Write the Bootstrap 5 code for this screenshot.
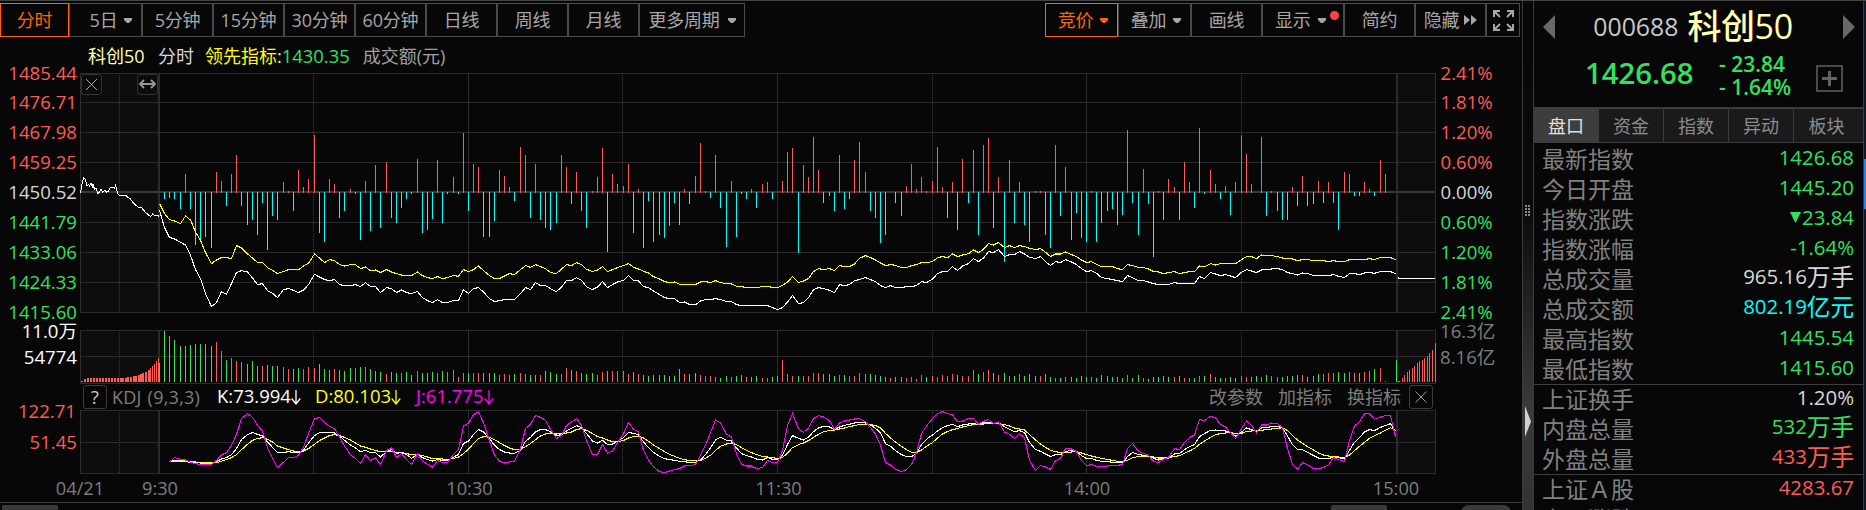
<!DOCTYPE html>
<html lang="zh-CN">
<head>
<meta charset="utf-8">
<title>科创50 分时</title>
<link href="https://cdn.jsdelivr.net/npm/bootstrap@5.3.0/dist/css/bootstrap.min.css" rel="stylesheet">
<style>
  :root { --up:#ff5a55; --down:#33e160; --frame:#4a4a4a; --grid:#2b2b2b; }
  body { background:#070707; color:#a0a0a0; font-family:"Open Sans","Noto Sans CJK SC",sans-serif; font-size:18px; line-height:1; height:510px; overflow:hidden; }
  svg { display:block; overflow:visible; }
  .app-frame { height:510px; border-top:1px solid #444; }
  .chart-pane { width:1522px; height:509px; }
  .tools { height:34px; margin-top:2px; }
  .tools-right { margin-right:2px; }
  .tool { height:34px; background:transparent; border:1px solid var(--frame); border-radius:0; color:#a6a6a6; padding:0; font-size:18px; line-height:1; white-space:nowrap; letter-spacing:-.2px; gap:7px; }
  .tool.active-tool { border-color:#f60; color:#f60; }
  .tool .cr { width:8px; height:5px; flex:none; }
  .w69{width:69px}.w71{width:71px}.w73{width:73px}.w82{width:82px}.w106{width:106px}.w34{width:34px}
  .dot { position:absolute; right:4px; top:7px; width:9px; height:9px; border-radius:50%; background:#ff4343; }
  .legend-row { height:34px; padding:4px 0 0 88px; }
  .legend-row span { white-space:nowrap; }
  .kdj-row { height:26px; padding:0 89px 1px 83px; }
  .kbox { width:24px; height:24px; border:1px solid #3c3c3c; border-radius:3px; color:#ccc; }
  .up{color:var(--up)}.dn{color:var(--down)}.ye{color:#ff0}.mg{color:#f0f}.cy{color:#0ff}.pale{color:#ffffae}.lt{color:#d8d8d8}.dim{color:#7d7d7d}
  .chart text { font-size:18.6px; }
  .chart .time { font-size:18.2px; fill:#7d7d7d; }
  .scroll-strip { height:8px; border-top:1px solid #3c3c3c; overflow:hidden; }
  .thumb { height:8px; margin-top:2px; background:#3a3a3a; border-radius:2px 2px 0 0; }
  .splitter { width:12px; border-left:1px solid #3c3c3c; border-right:1px solid #3c3c3c; background:linear-gradient(#070707 0,#0a0a0a 40%,#3a3a3a 80%,#333); }
  .quote { width:330px; height:509px; overflow:hidden; border-right:1px solid #3c3c3c; }
  .edge { width:2px; background:#0a1730; }
  .edge div { margin-top:158px; height:50px; background:#1e86ff; }
  .q-title { height:44px; padding:0 8px 0 9px; }
  .q-ident { gap:9px; padding:6px 12px 0 0; }
  .q-price { height:62px; padding-left:51px; }
  .q-code { font-size:24.8px; color:#c8c8c8; }
  .q-name { font-size:34px; font-weight:500; color:#ffffae; letter-spacing:-.4px; line-height:44px; white-space:nowrap;}
  .q-last { font-size:29.3px; font-weight:600; width:118px; }
  .q-diff { font-size:21px; font-weight:600; line-height:23px; width:80px; white-space:pre; }
  .q-tabs { height:36px; border-top:2px solid #3c3c3c; border-bottom:1px solid #3c3c3c; }
  .q-tabs .nav-link { height:33px; padding:0; width:65px; border-radius:0; border-right:1px solid #3c3c3c; background:#1a1a1a; color:#8c8c8c; font-size:18px; line-height:34px; text-align:center; }
  .q-tabs .nav-link.active { background:#3d3d3d; color:#e0e0e0; }
  .q-tabs .nav-link:last-child { width:auto; flex:1; border:0; padding-right:4px; }
  .q-row { height:30px; padding:0 9px 0 8px; font-size:23px; color:#808080; background:transparent; white-space:nowrap; }
  .q-row .val { font-size:20.4px; padding-bottom:3px; }
  .q-row .val i { font-style:normal; font-size:23.6px; vertical-align:-2px; }
  .rule-top { box-shadow:inset 0 1px #3f3f3f; }
</style>
</head>
<body>
<div class="app-frame d-flex">
  <main class="chart-pane d-flex flex-column flex-shrink-0">
    <nav class="tools d-flex flex-shrink-0">
      <button class="tool active-tool w69">分时</button>
      <button class="tool w73 d-flex align-items-center justify-content-center" style="padding-left:11px">5日 <svg class="cr" viewBox="0 0 8 5"><path fill="currentColor" d="M0 0h8v2L5 5H3L0 2z"/></svg></button>
      <button class="tool w71">5分钟</button>
      <button class="tool w71">15分钟</button>
      <button class="tool w71">30分钟</button>
      <button class="tool w71">60分钟</button>
      <button class="tool w71">日线</button>
      <button class="tool w71">周线</button>
      <button class="tool w71">月线</button>
      <button class="tool w106 d-flex align-items-center justify-content-center" style="gap:8px">更多周期 <svg class="cr" viewBox="0 0 8 5"><path fill="currentColor" d="M0 0h8v2L5 5H3L0 2z"/></svg></button>
      <div class="tools-right d-flex ms-auto">
        <button class="tool active-tool w73 d-flex align-items-center justify-content-center" style="padding-left:3px">竞价 <svg class="cr" viewBox="0 0 8 5"><path fill="currentColor" d="M0 0h8v2L5 5H3L0 2z"/></svg></button>
        <button class="tool w73 d-flex align-items-center justify-content-center" style="padding-left:3px">叠加 <svg class="cr" viewBox="0 0 8 5"><path fill="currentColor" d="M0 0h8v2L5 5H3L0 2z"/></svg></button>
        <button class="tool w71">画线</button>
        <button class="tool w82 d-flex align-items-center position-relative ps-2"><span class="ps-1">显示</span> <svg class="cr" viewBox="0 0 8 5"><path fill="currentColor" d="M0 0h8v2L5 5H3L0 2z"/></svg><span class="dot"></span></button>
        <button class="tool w71">简约</button>
        <button class="tool w71 d-flex align-items-center justify-content-center" style="gap:5px">隐藏 <svg width="13" height="10" viewBox="0 0 13 10"><path fill="currentColor" d="M0 0 6 5 0 10zM7 0l6 5-6 5z"/></svg></button>
        <button class="tool w34 d-flex align-items-center justify-content-center"><svg width="21" height="21" viewBox="0 0 21 21" fill="none" stroke="currentColor" stroke-width="2"><path d="M1 7V1h6M1 1l6 6M14 1h6v6M20 1l-6 6M1 14v6h6M1 20l6-6M20 14v6h-6M20 20l-6-6"/></svg></button>
      </div>
    </nav>
    <div class="legend-row d-flex align-items-center flex-shrink-0">
      <span class="pale" style="width:70px">科创50</span><span class="lt" style="width:47px">分时</span>
      <span class="ye">领先指标:</span><span class="dn" style="width:81px;font-size:18.400px">1430.35</span><span>成交额(元)</span>
    </div>
    <svg class="chart flex-shrink-0" id="upper" width="1522" height="313" viewBox="0 71 1522 313"></svg>
    <div class="kdj-row d-flex align-items-center flex-shrink-0">
      <span class="kbox d-flex align-items-center justify-content-center">?</span>
      <span class="dim" style="width:110px;padding-left:5px;letter-spacing:.25px;word-spacing:1px;white-space:nowrap">KDJ&nbsp;(9,3,3)</span>
      <span class="d-flex align-items-center text-white" style="width:98px;font-size:18.500px">K:73.994<svg width="10" height="16" viewBox="0 0 10 16" fill="none" stroke="currentColor"><path d="M5 1v14M.7 9.5 5 15l4.300-5.500" stroke-width="1.300"/></svg></span>
      <span class="d-flex align-items-center ye" style="width:101px;font-size:18.500px">D:80.103<svg width="10" height="16" viewBox="0 0 10 16" fill="none" stroke="currentColor"><path d="M5 1v14M.7 9.5 5 15l4.300-5.500" stroke-width="1.300"/></svg></span>
      <span class="d-flex align-items-center mg" style="font-size:18.500px">J:61.775<svg width="10" height="16" viewBox="0 0 10 16" fill="none" stroke="currentColor"><path d="M5 1v14M.7 9.5 5 15l4.300-5.500" stroke-width="1.300"/></svg></span>
      <span class="d-flex ms-auto dim" style="gap:15px;margin-right:8px"><span>改参数</span><span>加指标</span><span>换指标</span></span>
      <span class="kbox d-flex align-items-center justify-content-center"><svg width="12" height="12" viewBox="0 0 12 12" stroke="#999"><path d="M.5.5l11 11M11.5.5l-11 11"/></svg></span>
    </div>
    <svg class="chart flex-shrink-0" id="lower" width="1522" height="92" viewBox="0 410 1522 92"></svg>
    <div class="scroll-strip d-flex flex-shrink-0">
      <div class="thumb" style="width:56px;margin-left:2px"></div>
      <div class="thumb" style="width:56px;margin-left:1273px"></div>
      <div class="thumb" style="width:50px;margin-left:74px;border-radius:9px 9px 0 0"></div>
    </div>
  </main>
  <div class="splitter flex-shrink-0">
    <svg width="10" height="509" viewBox="0 1 10 509" shape-rendering="crispEdges">
      <path stroke="#8a8a8a" stroke-dasharray="2 1" stroke-width="2" d="M2 206h6M2 209h6M2 212h6M2 215h6"/>
      <path fill="#d0d0d0" shape-rendering="auto" d="M2 406l6 15.500-6 15.500z"/>
    </svg>
  </div>
  <aside class="quote d-flex flex-column flex-shrink-0">
    <header class="q-title d-flex align-items-center justify-content-between flex-shrink-0">
      <svg width="12" height="24" viewBox="0 0 12 24" class="mt-2"><path fill="#686868" d="M12 0v24L0 12z"/></svg>
      <div class="q-ident d-flex align-items-center"><span class="q-code">000688</span><span class="q-name">科创50</span></div>
      <svg width="12" height="24" viewBox="0 0 12 24" class="mt-2"><path fill="#686868" d="M0 0l12 12L0 24z"/></svg>
    </header>
    <div class="q-price d-flex flex-shrink-0">
      <div class="q-last dn" style="padding-top:14px">1426.68</div>
      <div class="q-diff dn" style="padding:8px 0 0 16px">- 23.84
- 1.64%</div>
      <svg width="28" height="28" viewBox="0 0 28 28" style="margin:20px 0 0 33px" fill="none" stroke="#626262"><rect x="1" y="1" width="25" height="25" stroke-width="1.500"/><path d="M13.500 6v15M6 13.500h15" stroke-width="3"/></svg>
    </div>
    <nav class="q-tabs nav nav-pills flex-nowrap flex-shrink-0">
      <a class="nav-link active">盘口</a><a class="nav-link">资金</a><a class="nav-link">指数</a><a class="nav-link">异动</a><a class="nav-link">板块</a>
    </nav>
    <div class="flex-shrink-0" style="margin-top:1px">
      <div class="q-row d-flex align-items-center justify-content-between"><span>最新指数</span><span class="val dn">1426.68</span></div>
      <div class="q-row d-flex align-items-center justify-content-between"><span>今日开盘</span><span class="val dn">1445.20</span></div>
      <div class="q-row d-flex align-items-center justify-content-between"><span>指数涨跌</span><span class="val dn d-flex align-items-center"><svg width="11" height="11" viewBox="0 0 11 11" style="margin-right:1px"><path fill="currentColor" d="M0 0h11L5.500 11z"/></svg>23.84</span></div>
      <div class="q-row d-flex align-items-center justify-content-between"><span>指数涨幅</span><span class="val dn">-1.64%</span></div>
      <div class="q-row d-flex align-items-center justify-content-between"><span>总成交量</span><span class="val lt">965.16<i>万手</i></span></div>
      <div class="q-row d-flex align-items-center justify-content-between"><span>总成交额</span><span class="val cy">802.19<i>亿元</i></span></div>
      <div class="q-row d-flex align-items-center justify-content-between"><span>最高指数</span><span class="val dn">1445.54</span></div>
      <div class="q-row d-flex align-items-center justify-content-between"><span>最低指数</span><span class="val dn">1415.60</span></div>
      <div class="q-row rule-top d-flex align-items-center justify-content-between"><span>上证换手</span><span class="val lt">1.20%</span></div>
      <div class="q-row d-flex align-items-center justify-content-between"><span>内盘总量</span><span class="val dn">532<i>万手</i></span></div>
      <div class="q-row d-flex align-items-center justify-content-between"><span>外盘总量</span><span class="val up">433<i>万手</i></span></div>
      <div class="q-row rule-top d-flex align-items-center justify-content-between"><span>上证Ａ股</span><span class="val up">4283.67</span></div>
      <div class="q-row d-flex align-items-center justify-content-between"><span>上Ａ涨跌</span></div>
    </div>
  </aside>
  <div class="edge flex-shrink-0"><div></div></div>
</div>
<script src="https://cdn.jsdelivr.net/npm/bootstrap@5.3.0/dist/js/bootstrap.bundle.min.js"></script>
<script>
// One sample per minute from 9:30; values are thirds of a pixel below y = 120.
const X0 = 159, STEP = 5.15, nums = s => s.trim().split(/\s+/).map(Number);
const px = i => Math.round(X0 + STEP * i);
const py = v => 120 + v / 3;
const UP = '#ff5a55', DOWN = '#33e160', GRAY = '#7d7d7d';

const flow = nums(`216 237 234 237 267 162 267 375 366 351 384 156 183 258 162 105 258 315 300 345 249 390 288 300 186 213 273 150 201 177
45 339 366 177 192 294 273 207 221 360 183 333 135 324 126 294 309 264 237 221 117 339 330 297 120 309 221 171 221 39
273 132 141 351 351 303 150 168 201 243 81 105 294 132 300 324 330 309 105 141 252 156 273 324 213 171 84 396 162 192
198 132 339 207 384 243 366 345 354 318 249 315 207 252 168 69 213 234 105 264 381 183 351 221 237 207 264 192 186 237
216 183 96 84 399 135 171 51 150 249 228 273 105 267 237 120 66 156 273 294 369 345 216 249 288 198 132 207 171 213
183 81 201 294 186 330 117 249 90 345 75 54 324 171 426 120 309 186 315 366 213 213 345 384 75 288 141 360 279 354
366 213 366 309 273 267 315 285 30 249 345 147 252 411 213 300 177 201 300 126 186 264 24 221 150 192 237 198 285 186
45 102 192 216 51 288 213 273 300 300 201 258 168 258 252 183 249 186 249 330 156 162 228 228 186 207 228 120 162`);

const lead = nums(`250 280 298 302 310 287 299 335 360 397 430 419 412 412 415 376 383 401 413 427 427 442 450 460 454 448 448 448 437 429
401 413 427 418 421 433 437 433 433 445 440 451 449 457 448 455 460 464 466 466 455 466 472 475 469 475 472 466 468 448
454 448 437 451 466 475 475 467 460 463 448 436 441 433 439 445 457 460 446 433 436 427 433 447 454 449 439 454 448 442
436 430 441 446 453 458 469 476 484 487 485 492 493 493 493 485 484 487 481 487 490 491 498 499 502 502 502 499 499 501
502 495 485 469 487 482 475 454 445 448 445 451 436 439 439 431 414 406 412 419 428 436 433 435 442 442 436 433 427 427
424 412 409 412 401 409 404 400 389 397 387 370 374 367 382 376 382 376 379 384 388 385 396 409 401 401 395 403 409 419
427 424 432 439 439 439 445 448 433 436 442 442 446 454 455 460 457 454 460 457 454 454 437 439 430 434 430 430 430 430
418 409 409 415 404 406 406 409 413 415 416 421 418 418 421 421 421 424 421 424 424 418 418 418 418 415 418 412 412 412 418`);

const price = nums(`270 322 351 356 366 374 405 448 475 520 559 547 514 522 490 457 451 455 473 493 490 511 519 532 508 505 510 517 509 493
462 470 478 481 478 493 496 496 493 499 487 499 499 517 502 505 517 509 517 520 514 532 541 547 538 547 547 541 541 508
520 505 502 515 535 544 541 538 538 538 520 502 508 487 496 496 505 514 500 481 481 472 480 499 508 500 484 502 493 485
480 466 481 482 499 502 512 523 532 535 535 547 545 553 553 542 538 538 535 538 544 544 553 556 556 556 556 556 556 562
568 562 545 526 550 547 532 508 502 505 510 517 493 496 493 481 478 472 478 484 496 502 496 502 502 499 499 496 484 487
476 460 454 454 439 451 437 430 415 424 413 394 397 388 409 403 403 394 401 411 415 409 424 436 424 427 418 425 433 445
454 451 459 472 475 478 481 484 466 472 481 481 485 490 493 493 493 487 490 490 490 490 469 475 457 461 466 463 467 472
456 448 452 457 449 448 446 445 448 457 460 464 458 460 466 466 466 466 463 468 472 460 460 463 458 457 459 454 454 454 460`);

const K = nums(`1024 1021 1022 1024 1026 1027 1028 1029 1030 1024 1016 1012 1003 985 958 943 937 942 947 965 981 997 997 994 997 997 990 968
946 937 937 937 938 947 960 974 983 994 990 997 997 1010 994 988 999 997 1003 1014 1002 1012 1018 1022 1018 1020 1020 1011 1002 970
962 943 928 935 955 975 988 995 998 999 990 963 951 935 928 928 934 946 943 932 924 916 922 940 962 968 960 973 971 963
952 937 939 943 965 982 996 1008 1015 1018 1020 1023 1024 1027 1026 1019 1003 983 959 951 960 962 983 1000 1006 1010 1016 1019 1012 1017
1018 1004 973 946 954 959 950 934 923 918 920 928 920 915 912 908 907 908 914 924 938 970 978 991 1003 1009 1009 1000 973 957
944 932 922 916 912 919 914 911 909 913 907 906 909 908 919 927 934 931 937 966 988 993 1001 1009 1003 1003 993 991 994 1006
1015 1015 1020 1023 1024 1026 1027 1028 1009 997 1003 1005 1006 1014 1019 1014 1013 1001 1000 988 979 973 949 940 930 929 931 932 937 947
935 923 928 934 923 922 919 919 922 947 973 988 988 996 1006 1013 1015 1015 1010 1012 1016 990 966 952 935 928 931 921 916 910 932`);

const D = nums(`1025 1024 1022 1022 1024 1025 1026 1027 1027 1027 1023 1018 1012 1003 988 972 960 955 952 957 965 977 983 988 992 994 992 985
972 961 953 946 943 946 951 959 968 977 981 986 991 994 994 994 997 997 1000 1003 1003 1006 1010 1015 1015 1016 1017 1015 1010 1000
986 970 955 949 951 958 967 976 983 988 988 979 970 958 947 941 938 941 940 938 935 928 925 930 940 949 953 959 964 964
961 953 949 947 953 963 974 985 994 1002 1008 1014 1018 1021 1021 1021 1014 1005 990 978 971 968 973 982 990 997 1003 1009 1010 1012
1015 1012 998 982 973 968 961 951 942 934 931 929 926 923 919 916 912 911 913 916 923 939 953 965 978 988 996 997 989 978
967 953 941 934 928 925 920 916 913 913 911 910 910 910 913 917 923 926 929 943 959 971 981 990 994 997 996 995 994 998
1003 1007 1011 1014 1018 1020 1023 1024 1020 1012 1009 1008 1007 1010 1013 1013 1012 1009 1006 999 992 984 972 962 951 943 940 938 937 940
939 934 932 931 930 928 926 925 922 931 946 959 969 979 989 998 1004 1007 1009 1010 1012 1004 991 978 966 954 946 938 930 922 930`);

const J = nums(`1025 1012 1018 1019 1026 1030 1033 1033 1033 1020 1004 997 975 942 895 880 891 915 933 982 1014 1042 1026 1012 1012 1005 981 940
895 892 907 918 925 950 977 1003 1015 1030 1003 1021 1013 1033 991 982 1012 1000 1017 1033 1000 1022 1032 1040 1021 1027 1027 1003 988 917
909 883 875 907 962 1004 1023 1028 1025 1023 985 925 912 886 891 900 927 955 945 916 905 895 915 960 1003 1003 973 998 992 967
940 907 926 935 990 1018 1040 1054 1057 1052 1048 1045 1037 1036 1033 1005 975 937 899 908 942 950 1000 1032 1037 1037 1045 1042 1021 1027
1027 990 915 880 925 937 923 895 886 890 901 927 908 902 899 896 895 904 922 942 975 1027 1034 1047 1054 1048 1033 998 940 917
895 880 874 880 884 904 902 895 895 911 903 898 910 905 935 942 955 940 952 1020 1051 1036 1040 1048 1021 1015 985 986 994 1021
1036 1033 1038 1039 1037 1036 1035 1033 985 970 993 1000 1005 1023 1027 1017 1011 985 988 967 952 944 898 901 888 893 913 920 937 955
925 902 915 937 914 914 908 910 922 985 1033 1046 1027 1033 1045 1045 1042 1033 1012 1018 1024 960 917 904 880 881 897 890 886 886 949`);

// Volume: trailing r = rising, g = falling
const volume = `730g 633g 648g 660g 678g 678g 675g 672g 672g 672g 678g 666r 693r 720g 714r 723r 726r 732g 723g 738g 738r 735g 738g 738g 741r 747r 747g 744g 747r 741r
744r 732g 747g 750g 747r 750g 753g 744g 744r 741g 741r 747g 753g 756g 762r 756g 759g 759r 756g 765g 753r 759g 759g 756g 759r 753g 756r 750r 771r 759r
759g 759r 759r 759g 759g 759g 765r 762r 765r 762g 759r 762r 765g 765g 765r 753g 756g 762g 762r 744r 750g 753r 759g 762g 759g 765r 756r 753g 753r 753r
753r 762r 756g 762r 765g 768g 765g 765g 765g 768g 768g 747g 762r 762g 759g 765r 768r 768r 771r 774g 768g 771r 768g 765g 771r 771g 768g 774r 774r 771g
768g 720r 762r 768r 768g 768r 768r 759r 759r 762g 762g 768g 765r 765g 768r 768r 759r 762r 762g 765g 768g 771g 774r 771g 771g 774r 771r 777r 765r 771g
768r 771r 765r 768r 762r 765g 768r 768r 750r 762g 756r 750r 759g 765r 759g 768r 768g 762r 768g 762g 768g 768r 762g 771g 774r 774g 771r 771g 774g 768g
771g 771r 774g 765g 768g 771g 771g 774g 765r 774g 765g 774r 777g 771g 771g 768g 771g 771r 768g 774r 774r 774g 768r 768g 762r 771g 774g 774r 771g 774g
768r 771r 771g 768g 771r 765g 768r 771r 771g 768g 768g 765g 765r 771g 768g 762g 762r 759r 759r 756g 759g 756r 759r 759g 756r 753r 747g 744r 783r`.trim().split(/\s+/);

const rect = (x, y, w, h, c) => `<rect x="${x}" y="${y}" width="${w}" height="${h}" fill="${c}"/>`;
const text = (x, y, s, c, a = 'start', k = '') => `<text class="${k}" x="${x}" y="${y}" fill="${c}" text-anchor="${a}">${s}</text>`;
const line = (pts, c) => `<polyline points="${pts.map(p => p.join()).join(' ')}" fill="none" stroke="${c}" stroke-width="1.05" shape-rendering="crispEdges"/>`;
const series = (a, c, from = 0) => line(a.map((v, k) => [px(k + from) + .5, (py(v) + .3).toFixed(1)]), c);

function panel(top, bottom, rows) {
  const h = bottom - top;
  let s = rect(81, top, 77, h, '#0d0d0d') + rect(1398, top, 37, h, '#0d0d0d');
  [top, ...rows, bottom].forEach(y => s += rect(80, y, 1356, 1, '#2a2a2a'));
  [80, 468, 777, 1086, 1435].forEach(x => s += rect(x, top, 1, h, '#2e2e2e'));
  [158, 1396].forEach(x => s += rect(x, top, 2, h, '#2b2b2b'));
  [119, 313, 622, 932, 1241].forEach(x =>
    s += `<path d="M${x + .5} ${top + 2}V${bottom}" stroke="#3a3a3a" stroke-dasharray="1 1"/>`);
  return s;
}

let u = panel(73, 312, [102, 132, 162, 192, 222, 252, 282]) + panel(330, 383, [356]);
u += rect(81, 191, 1354, 2, '#3a3838');
flow.forEach((v, i) => {
  if (v === 216) return;
  const y = Math.round(py(v));
  u += v < 216 ? rect(px(i), y, 1, 193 - y, UP) : rect(px(i), 192, 1, y - 192, '#00ffff');
});
u += series(lead, '#ffff00') + series(price, '#ffffff');
const pre = nums(`241 218 244 195 250 172 255 178 260 196 265 192 268 197 272 190 276 200 278 193 283 207 287 203 293 222 302 207 307 216 313 210 319 215 325 213 330 201 343 203 346 196 352 219 358 226 378 227 390 236 403 252 415 261 425 263 435 276 451 289 457 281 465 286 475 287`);
const prePts = [];
for (let k = 0; k < pre.length; k += 2) prePts.push([(pre[k] / 3 + .3).toFixed(1), (py(pre[k + 1]) + .3).toFixed(1)]);
u += line(prePts, '#fff') + line([[1398, 277.6], [1399.5, 278.5], [1435, 278.5]], '#fff');

volume.forEach((t, i) => {
  const y = Math.round(py(parseInt(t)));
  u += rect(px(i), y, 1, 382 - y, t.endsWith('r') ? UP : DOWN);
});
u += rect(1396, 360, 1, 22, DOWN);
// Call auction volumes before the open and after the close
for (let k = 0; k < 12; k++) { const h = k < 1 ? 1 : k < 2 ? 3 : 4; u += rect(81 + k * 3, 382 - h, 2, h, UP); }
nums('4 4 4 4 5 5 6 6 7 8').forEach((h, k) => u += rect(Math.round(117 + k * 2.6), 382 - h, 2, h, UP));
[[143, 9], [146, 10], [149, 12], [151, 14], [153, 16], [155, 18], [157, 21], [159, 24]].forEach(([x, h]) => u += rect(x - 1, 382 - h, x < 151 ? 2 : 1, h, UP));
[[1398, 1], [1399, 1], [1402, 4], [1404, 7], [1407, 10], [1409, 12], [1412, 14], [1414, 16], [1417, 19], [1419, 21], [1422, 22], [1424, 24], [1427, 26], [1429, 29], [1432, 32], [1435, 39]]
  .forEach(([x, h]) => u += rect(x, 382 - h, 1, h, UP));

['1485.44', '1476.71', '1467.98', '1459.25', '1450.52', '1441.79', '1433.06', '1424.33', '1415.60'].forEach((s, i) => {
  const y = [73, 102, 132, 162, 192, 222, 252, 282, 312][i] + 7, c = i < 4 ? UP : i === 4 ? '#d8d8d8' : DOWN;
  u += text(77, y, s, c, 'end');
  u += text(1440.5, y, ['2.41%', '1.81%', '1.20%', '0.60%', '0.00%', '0.60%', '1.20%', '1.81%', '2.41%'][i], c);
});
u += text(77, 338, '11.0万', '#fff', 'end') + text(77, 364, '54774', '#fff', 'end');
u += text(1440, 338, '16.3亿', GRAY) + text(1440, 364, '8.16亿', GRAY);
u += `<g fill="#0b0b0b" stroke="#333"><rect x="81.500" y="74.500" width="20" height="20" rx="3"/><rect x="137.500" y="74.500" width="20" height="20" rx="3"/></g>
<path d="M86 79l11 11M97 79l-11 11" stroke="#aaa"/><path d="M140 84h15M144 80l-4 4 4 4M151 80l4 4-4 4" fill="none" stroke="#999" stroke-width="1.800"/>`;
document.getElementById('upper').innerHTML = u;

let l = panel(410, 473, [442]);
l += series(D, '#ffff00', 2) + series(K, '#ffffff', 2) + series(J, '#ff00ff', 2);
l += text(76, 418, '122.71', UP, 'end') + text(77, 449, '51.45', UP, 'end');
[[80, '04/21'], [160, '9:30'], [469.5, '10:30'], [778.5, '11:30'], [1087, '14:00'], [1396, '15:00']].forEach(([x, s]) => l += text(x, 495, s, GRAY, 'middle', 'time'));
document.getElementById('lower').innerHTML = l;
</script>
</body>
</html>
